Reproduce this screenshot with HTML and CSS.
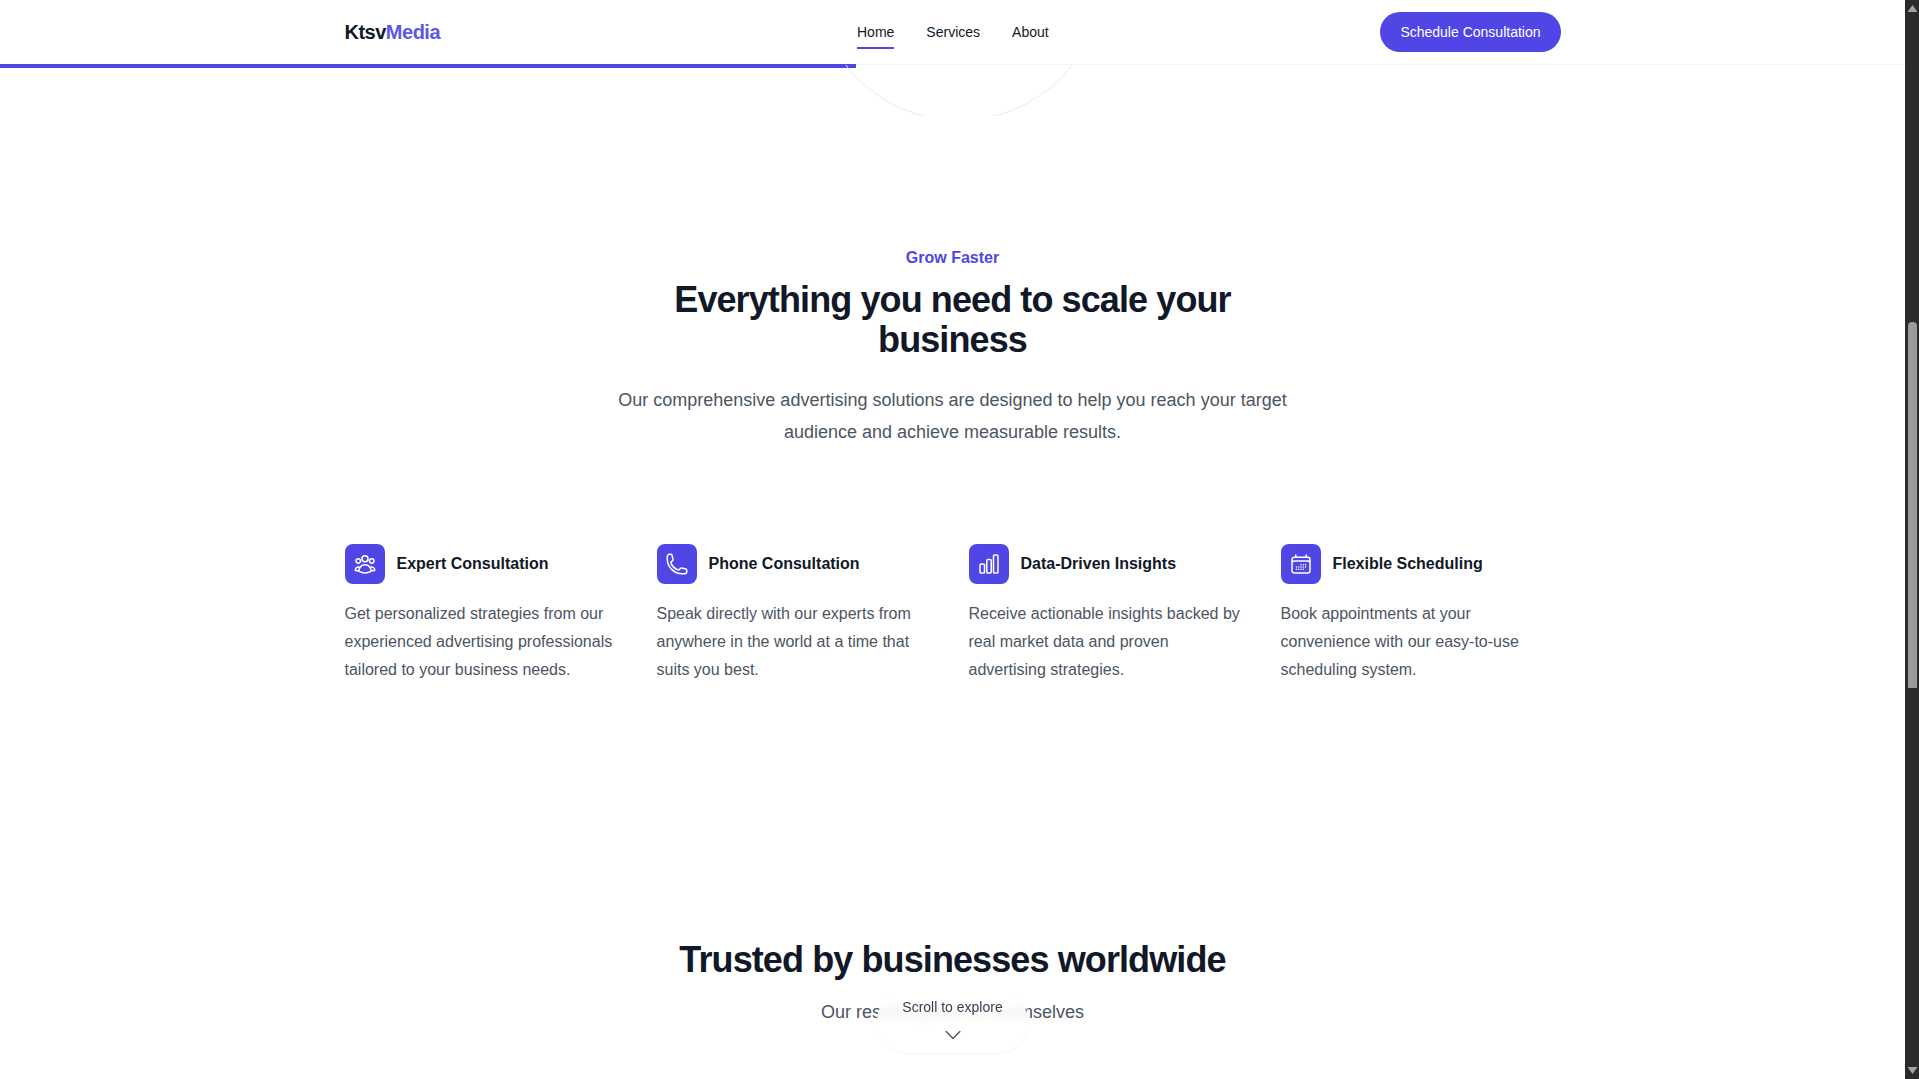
FILE: index.html
```html
<!DOCTYPE html>
<html lang="en">

<head>
    <meta charset="UTF-8">
    <meta name="viewport" content="width=device-width, initial-scale=1.0">
    <title>KtsvMedia</title>
    <link rel="stylesheet" href="styles.css">
</head>

<body>

    <div class="page">
        <header class="topbar">
            <div class="topbar-inner">
                <a class="logo" href="#">Ktsv<span>Media</span></a>
                <nav class="nav">
                    <a class="nav-link active" href="#">Home</a>
                    <a class="nav-link" href="#">Services</a>
                    <a class="nav-link" href="#">About</a>
                </nav>
                <a class="cta" href="#">Schedule Consultation</a>
            </div>
        </header>
        <div class="progress"></div>
        <div class="hero-arc"><div class="hero-circle"></div></div>

        <main>
            <section class="features">
                <div class="section-head">
                    <p class="eyebrow">Grow Faster</p>
                    <h2>Everything you need to scale your business</h2>
                    <p class="lead">Our comprehensive advertising solutions are designed to help you reach your target audience and achieve measurable results.</p>
                </div>

                <div class="feature-grid">
                    <article class="feature">
                        <div class="feature-title">
                            <span class="feature-icon">
                                <svg viewBox="0 0 24 24"><path d="M18 18.72a9.094 9.094 0 0 0 3.741-.479 3 3 0 0 0-4.682-2.72m.94 3.198.001.031c0 .225-.012.447-.037.666A11.944 11.944 0 0 1 12 21c-2.17 0-4.207-.576-5.963-1.584A6.062 6.062 0 0 1 6 18.719m12 0a5.971 5.971 0 0 0-.941-3.197m0 0A5.995 5.995 0 0 0 12 12.75a5.995 5.995 0 0 0-5.058 2.772m0 0a3 3 0 0 0-4.681 2.72 8.986 8.986 0 0 0 3.74.477m.94-3.197a5.971 5.971 0 0 0-.94 3.197M15 6.75a3 3 0 1 1-6 0 3 3 0 0 1 6 0Zm6 2.25a2.25 2.25 0 1 1-4.5 0 2.25 2.25 0 0 1 4.5 0Zm-13.5 0a2.25 2.25 0 1 1-4.5 0 2.25 2.25 0 0 1 4.5 0Z"/></svg>
                            </span>
                            <h3>Expert Consultation</h3>
                        </div>
                        <p>Get personalized strategies from our experienced advertising professionals tailored to your business needs.</p>
                    </article>
                    <article class="feature">
                        <div class="feature-title">
                            <span class="feature-icon">
                                <svg viewBox="0 0 24 24"><path d="M2.25 6.75c0 8.284 6.716 15 15 15h2.25a2.25 2.25 0 0 0 2.25-2.25v-1.372c0-.516-.351-.966-.852-1.091l-4.423-1.106c-.44-.11-.902.055-1.173.417l-.97 1.293c-.282.376-.769.542-1.21.38a12.035 12.035 0 0 1-7.143-7.143c-.162-.441.004-.928.38-1.21l1.293-.97c.363-.271.527-.734.417-1.173L6.963 3.102a1.125 1.125 0 0 0-1.091-.852H4.5A2.25 2.25 0 0 0 2.25 4.5v2.25Z"/></svg>
                            </span>
                            <h3>Phone Consultation</h3>
                        </div>
                        <p>Speak directly with our experts from anywhere in the world at a time that suits you best.</p>
                    </article>
                    <article class="feature">
                        <div class="feature-title">
                            <span class="feature-icon">
                                <svg viewBox="0 0 24 24"><path d="M3 13.125C3 12.504 3.504 12 4.125 12h2.25c.621 0 1.125.504 1.125 1.125v6.75C7.5 20.496 6.996 21 6.375 21h-2.25A1.125 1.125 0 0 1 3 19.875v-6.75ZM9.75 8.625c0-.621.504-1.125 1.125-1.125h2.25c.621 0 1.125.504 1.125 1.125v11.25c0 .621-.504 1.125-1.125 1.125h-2.25a1.125 1.125 0 0 1-1.125-1.125V8.625ZM16.5 4.125c0-.621.504-1.125 1.125-1.125h2.25C20.496 3 21 3.504 21 4.125v15.75c0 .621-.504 1.125-1.125 1.125h-2.25a1.125 1.125 0 0 1-1.125-1.125V4.125Z"/></svg>
                            </span>
                            <h3>Data-Driven Insights</h3>
                        </div>
                        <p>Receive actionable insights backed by real market data and proven advertising strategies.</p>
                    </article>
                    <article class="feature">
                        <div class="feature-title">
                            <span class="feature-icon">
                                <svg viewBox="0 0 24 24"><path d="M6.75 3v2.25M17.25 3v2.25M3 18.75V7.5a2.25 2.25 0 0 1 2.25-2.25h13.5A2.25 2.25 0 0 1 21 7.5v11.25m-18 0A2.25 2.25 0 0 0 5.25 21h13.5A2.25 2.25 0 0 0 21 18.75m-18 0v-7.5A2.25 2.25 0 0 1 5.25 9h13.5A2.25 2.25 0 0 1 21 11.25v7.5m-9-6h.008v.008H12v-.008ZM12 15h.008v.008H12V15Zm0 2.25h.008v.008H12v-.008ZM9.75 15h.008v.008H9.75V15Zm0 2.25h.008v.008H9.75v-.008ZM7.5 15h.008v.008H7.5V15Zm0 2.25h.008v.008H7.5v-.008Zm6.75-4.5h.008v.008h-.008v-.008Zm0 2.25h.008v.008h-.008V15Zm0 2.25h.008v.008h-.008v-.008Zm2.25-4.5h.008v.008H16.5v-.008Zm0 2.25h.008v.008H16.5V15Z"/></svg>
                            </span>
                            <h3>Flexible Scheduling</h3>
                        </div>
                        <p>Book appointments at your convenience with our easy-to-use scheduling system.</p>
                    </article>
                </div>
            </section>

            <section class="trusted">
                <h2>Trusted by businesses worldwide</h2>
                <p class="lead">Our results speak for themselves</p>
            </section>
        </main>

        <div class="scroll-hint">
            <span>Scroll to explore</span>
            <svg viewBox="0 0 24 24"><path d="m19.5 8.25-7.5 7.5-7.5-7.5"/></svg>
        </div>
    </div>

    <div class="scrollbar">
        <span class="arrow-up"></span>
        <div class="track"><div class="thumb"></div></div>
        <span class="arrow-down"></span>
    </div>

</body>

</html>
```

FILE: styles.css
```css
* {
    box-sizing: border-box;
}

html,
body {
    height: 100%;
    margin: 0;
    overflow: hidden;
}

body {
    display: flex;
    font-family: "Liberation Sans", Arial, sans-serif;
    color: #111827;
    background: #fff;
}

a {
    color: inherit;
    text-decoration: none;
}

.page {
    position: relative;
    flex: 1;
    min-width: 0;
    overflow: hidden;
}

/* top bar */
.topbar {
    height: 65px;
    background: #fff;
    border-bottom: 1px solid #f3f4f6;
}

.topbar-inner {
    position: relative;
    display: flex;
    align-items: center;
    justify-content: space-between;
    width: 1216px;
    height: 64px;
    margin: 0 auto;
}

.logo {
    font-size: 20px;
    font-weight: 700;
    letter-spacing: -0.5px;
}

.logo span {
    color: #5f57e8;
}

.nav {
    position: absolute;
    left: 512.5px;
    top: 0;
    display: flex;
    gap: 32px;
    height: 64px;
    align-items: center;
}

.nav-link {
    position: relative;
    font-size: 14px;
}

.nav-link.active::after {
    content: "";
    position: absolute;
    left: 0;
    right: 0;
    bottom: -9px;
    height: 2px;
    background: #4f46e5;
}

.cta {
    display: flex;
    align-items: center;
    height: 40px;
    padding: 0 20px;
    margin-left: auto;
    border-radius: 20px;
    background: #4f46e5;
    color: #fff;
    font-size: 14px;
}

.progress {
    position: absolute;
    top: 64px;
    left: 0;
    width: 856px;
    height: 4px;
    background: #4f46e5;
}

.hero-arc {
    position: absolute;
    top: 65px;
    left: 808px;
    width: 300px;
    height: 51px;
    overflow: hidden;
}

.hero-circle {
    position: absolute;
    top: -232px;
    left: 7px;
    width: 288px;
    height: 288px;
    border: 1px solid #e6eaf8;
    border-radius: 50%;
}

/* sections */
.features {
    width: 1216px;
    margin: 0 auto;
    padding-top: 181px;
}

.section-head {
    width: 672px;
    margin: 0 auto;
    text-align: center;
}

.eyebrow {
    margin: 0 0 10px;
    font-size: 16px;
    line-height: 24px;
    font-weight: 700;
    color: #4f46e5;
}

h2 {
    margin: 0;
    font-size: 36px;
    line-height: 40px;
    font-weight: 700;
    letter-spacing: -0.9px;
    color: #111827;
}

.lead {
    margin: 24px 0 0;
    font-size: 18px;
    line-height: 32px;
    color: #4b5563;
}

.feature-grid {
    display: grid;
    grid-template-columns: repeat(4, 280px);
    gap: 32px;
    margin-top: 96px;
}

.feature-title {
    display: flex;
    align-items: center;
    gap: 12px;
}

.feature-icon {
    display: flex;
    align-items: center;
    justify-content: center;
    width: 40px;
    height: 40px;
    border-radius: 8px;
    background: #4f46e5;
}

.feature-icon svg {
    width: 24px;
    height: 24px;
    fill: none;
    stroke: #fff;
    stroke-width: 1.5;
    stroke-linecap: round;
    stroke-linejoin: round;
}

.feature h3 {
    margin: 0;
    font-size: 16px;
    line-height: 24px;
    font-weight: 700;
    color: #111827;
}

.feature p {
    margin: 16px 0 0;
    font-size: 16px;
    line-height: 28px;
    color: #4b5563;
}

.trusted {
    margin-top: 256px;
    text-align: center;
}

.trusted .lead {
    margin-top: 16px;
}

/* floating hint over the content */
.scroll-hint {
    position: absolute;
    left: 877px;
    bottom: 26px;
    display: flex;
    flex-direction: column;
    align-items: center;
    gap: 7px;
    width: 151px;
    height: 63px;
    padding-top: 7px;
    border-radius: 32px;
    background: rgba(255, 255, 255, 0.85);
    backdrop-filter: blur(4px);
    box-shadow: 0 1px 2px rgba(0, 0, 0, 0.05);
    font-size: 14px;
    line-height: 20px;
    color: #374151;
}

.scroll-hint svg {
    width: 22px;
    height: 22px;
    fill: none;
    stroke: #4b5563;
    stroke-width: 1.5;
    stroke-linecap: round;
    stroke-linejoin: round;
}

/* window scrollbar */
.scrollbar {
    display: flex;
    flex-direction: column;
    align-items: center;
    flex: 0 0 14px;
    background: #2b2b2b;
}

.arrow-up,
.arrow-down {
    flex: 0 0 17px;
    width: 9px;
}

.arrow-up::before,
.arrow-down::before {
    content: "";
    display: block;
    width: 0;
    height: 0;
    margin-top: 5px;
    border-left: 5px solid transparent;
    border-right: 5px solid transparent;
    transform: translateX(-0.5px);
}

.arrow-up::before {
    border-bottom: 7px solid #a3a3a3;
}

.arrow-down::before {
    border-top: 7px solid #a3a3a3;
}

.track {
    flex: 1;
    width: 100%;
    padding: 305px 2px 0 3px;
}

.thumb {
    height: 366px;
    border-radius: 4px 4px 0 0;
    background: #9b9b9b;
}
```
